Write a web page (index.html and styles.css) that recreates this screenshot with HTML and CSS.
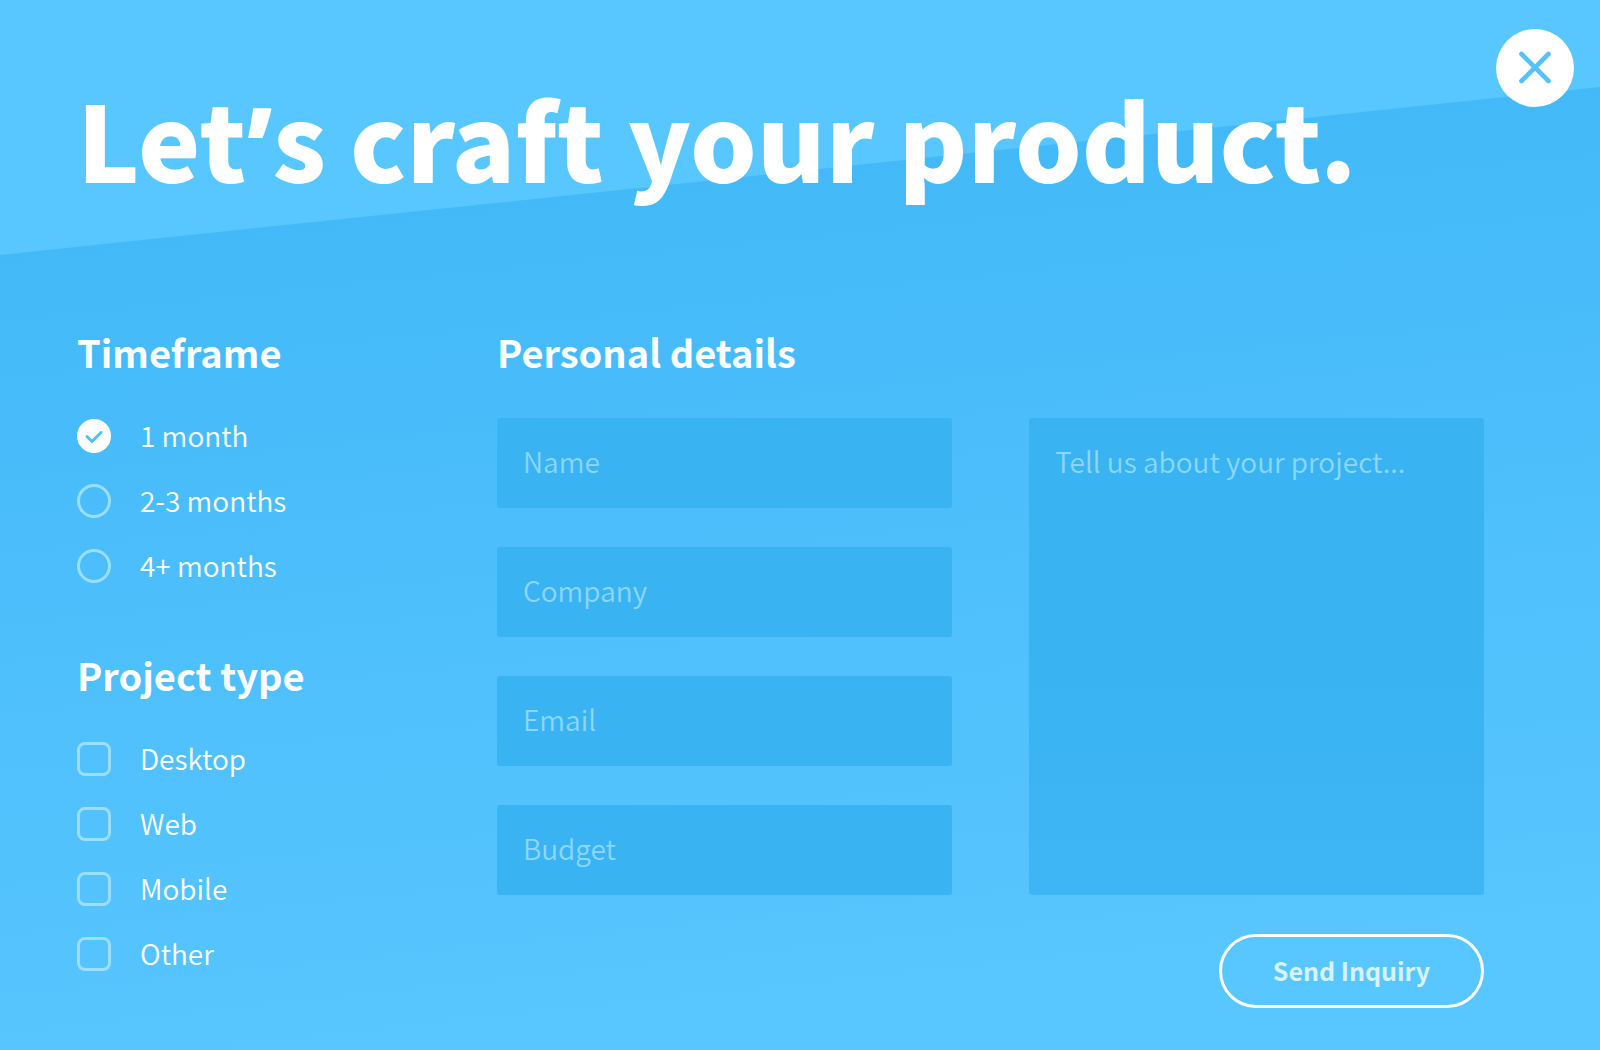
FILE: index.html
```html
<!DOCTYPE html>
<html lang="en">
<head>
<meta charset="utf-8">
<meta name="viewport" content="width=device-width, initial-scale=1">
<title>Project inquiry</title>
<link rel="stylesheet" href="styles.css">
</head>
<body>
<main class="page">
  <button class="close" type="button" aria-label="Close">
    <svg viewBox="0 0 78 78" aria-hidden="true"><path d="M25.5 25 52.5 52M52.5 25 25.5 52"/></svg>
  </button>
  <h1 class="title">Let<span class="apostrophe">’</span>s craft your product.</h1>
  <form class="inquiry">
    <div class="options">
      <fieldset class="group">
        <legend class="heading">Timeframe</legend>
        <div class="choices">
          <label class="option"><input type="radio" name="time" checked>1 month</label>
          <label class="option"><input type="radio" name="time">2-3 months</label>
          <label class="option"><input type="radio" name="time">4+ months</label>
        </div>
      </fieldset>
      <fieldset class="group">
        <legend class="heading">Project type</legend>
        <div class="choices">
          <label class="option"><input type="checkbox" name="type">Desktop</label>
          <label class="option"><input type="checkbox" name="type">Web</label>
          <label class="option"><input type="checkbox" name="type">Mobile</label>
          <label class="option"><input type="checkbox" name="type">Other</label>
        </div>
      </fieldset>
    </div>
    <section class="details">
      <h2 class="heading">Personal details</h2>
      <div class="fields">
        <div class="stack">
          <input class="field" type="text" placeholder="Name" aria-label="Name">
          <input class="field" type="text" placeholder="Company" aria-label="Company">
          <input class="field" type="email" placeholder="Email" aria-label="Email">
          <input class="field" type="text" placeholder="Budget" aria-label="Budget">
        </div>
        <textarea class="field message" placeholder="Tell us about your project..." aria-label="Tell us about your project"></textarea>
      </div>
      <button class="send" type="submit">Send Inquiry</button>
    </section>
  </form>
</main>
</body>
</html>
```
FILE: styles.css
```css
* { box-sizing: border-box; }
body {
  margin: 0;
  color: #fff;
  font-family: "Noto Sans CJK SC", "Noto Sans", sans-serif;
  background: #58c6ff;
}
.page {
  position: relative;
  min-height: 100vh;
  padding: 71px 116px 42px 77px;
  isolation: isolate;
}
.page::before {
  content: "";
  position: absolute;
  inset: 0;
  z-index: -1;
  background: linear-gradient(174deg, #43b9f8 20%, #58c6ff 90%);
  clip-path: polygon(0 255px, 100% 87px, 100% 100%, 0 100%);
}
.close {
  position: absolute;
  top: 29px;
  right: 26px;
  width: 78px;
  height: 78px;
  padding: 0;
  border: 0;
  border-radius: 50%;
  background: #fff;
}
.close svg {
  display: block;
  fill: none;
  stroke: #56c2f8;
  stroke-width: 4.6;
  stroke-linecap: round;
}
.title {
  margin: 0 0 125px;
  font-size: 105px;
  line-height: 132px;
  font-weight: 900;
  white-space: nowrap;
}
.apostrophe {
  font-family: "Noto Sans", sans-serif;
  line-height: 1;
}
.inquiry {
  display: grid;
  grid-template-columns: 380px 1fr;
  column-gap: 40px;
}
.options {
  display: flex;
  flex-direction: column;
  gap: 68px;
}
.group {
  margin: 0;
  padding: 0;
  border: 0;
}
.heading {
  margin: 0 0 42px;
  padding: 0;
  font-size: 38px;
  line-height: 48px;
  font-weight: 700;
}
.choices {
  display: grid;
  gap: 31px;
  padding-top: 1px;
}
.option {
  display: flex;
  align-items: flex-start;
  gap: 29px;
  height: 34px;
  font-size: 28px;
  line-height: 32px;
  font-weight: 350;
}
.option input {
  appearance: none;
  width: 34px;
  height: 34px;
  margin: 0;
  border: 3px solid #9bdeff;
  border-radius: 8px;
}
.option input[type="radio"] { border-radius: 50%; }
.option input:checked {
  border-color: #fff;
  background: #fff url("data:image/svg+xml,%3Csvg xmlns='http://www.w3.org/2000/svg' viewBox='0 0 28 28'%3E%3Cpath d='M7 14.5l5 5 9-9' fill='none' stroke='%2350bffa' stroke-width='3' stroke-linecap='round'/%3E%3C/svg%3E") center / 28px no-repeat;
}
.details { display: flex; flex-direction: column; }
.fields {
  display: grid;
  grid-template-columns: 1fr 1fr;
  gap: 77px;
}
.stack { display: grid; gap: 39px; }
.field {
  width: 100%;
  height: 90px;
  padding: 0 26px 4px;
  border: 0;
  border-radius: 3px;
  color: #fff;
  background: #3ab3f2;
  font: 350 28px/38px "Noto Sans CJK SC", "Noto Sans", sans-serif;
}
.field::placeholder { color: #8bd7ff; opacity: 1; }
.message {
  display: block;
  height: 100%;
  padding-top: 24px;
  background: linear-gradient(#3ab3f2 50%, #3eb5f4);
  resize: none;
}
.send {
  align-self: flex-end;
  width: 265px;
  height: 74px;
  margin-top: 39px;
  padding-bottom: 4px;
  border: 3px solid #fff;
  border-radius: 37px;
  color: #d8f3ff;
  background: transparent;
  font: 700 25px/34px "Noto Sans CJK SC", "Noto Sans", sans-serif;
}
```
